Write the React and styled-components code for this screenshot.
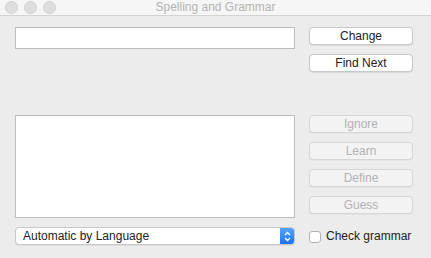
import styled, { createGlobalStyle } from 'styled-components'

const GlobalStyle = createGlobalStyle`
    html, body {
        margin: 0;
        padding: 0;
        background: #ececec;
    }
    body {
        font-family: "Liberation Sans", Arial, sans-serif;
        font-size: 12px;
        color: #222;
    }
`

// style part
const Window = styled.div`
    width: 431px;
    height: 258px;
    display: flex;
    flex-direction: column;
    background: #ececec;
    overflow: hidden;
`

const TitleBar = styled.div`
    position: relative;
    height: 15px;
    flex-shrink: 0;
    display: flex;
    align-items: center;
    justify-content: center;
    background: #f6f6f6;
    border-bottom: 1px solid #d3d3d3;
`

const Lights = styled.div`
    position: absolute;
    left: 5px;
    top: 1px;
    display: flex;
    gap: 6px;
`

const Light = styled.span`
    width: 11px;
    height: 11px;
    border-radius: 50%;
    background: #dedede;
    border: 0.5px solid #d0d0d0;
`

const Title = styled.div`
    color: #b4b4b4;
    font-size: 12px;
    line-height: 15px;
`

const Body = styled.div`
    display: flex;
    flex-direction: column;
    padding: 11px 18px 0 15px;
`

const Row = styled.div`
    display: flex;
    gap: 14px;
    margin-top: ${(p) => p.$top || 0}px;
    align-items: ${(p) => p.$align || 'flex-start'};
`

const Field = styled.div`
    box-sizing: border-box;
    width: 280px;
    height: ${(p) => p.$height}px;
    background: #fff;
    border: 1px solid #bdbdbd;
`

const ButtonColumn = styled.div`
    display: flex;
    flex-direction: column;
    gap: 9px;
`

const Button = styled.button`
    box-sizing: border-box;
    width: 104px;
    height: 18px;
    padding: 0;
    border-radius: 4px;
    font-family: inherit;
    font-size: 12px;
    line-height: 16px;
    background: ${(p) => (p.disabled ? '#f3f3f3' : '#fff')};
    color: ${(p) => (p.disabled ? '#b2b2b2' : '#222')};
    border: 1px solid ${(p) => (p.disabled ? '#d6d6d6' : '#c8c8c8')};
    box-shadow: 0 0.5px 0.5px rgba(0, 0, 0, ${(p) => (p.disabled ? 0.06 : 0.15)});
`

const Popup = styled.div`
    box-sizing: border-box;
    width: 280px;
    height: 18px;
    display: flex;
    align-items: center;
    background: #fff;
    border: 1px solid #c8c8c8;
    border-radius: 4px;
    box-shadow: 0 0.5px 0.5px rgba(0, 0, 0, 0.12);
    overflow: hidden;
`

const PopupLabel = styled.span`
    flex: 1;
    padding-left: 7px;
    line-height: 16px;
`

const PopupArrows = styled.span`
    width: 15px;
    height: 18px;
    margin: -1px -1px -1px 0;
    display: flex;
    align-items: center;
    justify-content: center;
    background: linear-gradient(#5aa6fc, #1b6ff6);
`

const CheckLabel = styled.label`
    display: flex;
    align-items: center;
    gap: 5px;
    line-height: 16px;
`

const CheckBox = styled.span`
    box-sizing: border-box;
    width: 12px;
    height: 12px;
    margin-top: 1px;
    background: #fff;
    border: 1px solid #b3b3b3;
    border-radius: 3px;
`

// function part

function App() {
    return (
        <>
            <GlobalStyle />
            <Window>
                <TitleBar>
                    <Lights>
                        <Light />
                        <Light />
                        <Light />
                    </Lights>
                    <Title>Spelling and Grammar</Title>
                </TitleBar>
                <Body>
                    <Row>
                        <Field $height={22} />
                        <ButtonColumn>
                            <Button>Change</Button>
                            <Button>Find Next</Button>
                        </ButtonColumn>
                    </Row>
                    <Row $top={43}>
                        <Field $height={103} />
                        <ButtonColumn>
                            <Button disabled>Ignore</Button>
                            <Button disabled>Learn</Button>
                            <Button disabled>Define</Button>
                            <Button disabled>Guess</Button>
                        </ButtonColumn>
                    </Row>
                    <Row $top={9} $align="center">
                        <Popup>
                            <PopupLabel>Automatic by Language</PopupLabel>
                            <PopupArrows>
                                <svg width="7" height="11" viewBox="0 0 7 11">
                                    <path
                                        d="M1 4 L3.5 1.5 L6 4 M1 7 L3.5 9.5 L6 7"
                                        fill="none"
                                        stroke="#fff"
                                        strokeWidth="1.3"
                                    />
                                </svg>
                            </PopupArrows>
                        </Popup>
                        <CheckLabel>
                            <CheckBox />
                            Check grammar
                        </CheckLabel>
                    </Row>
                </Body>
            </Window>
        </>
    )
}

export default App
